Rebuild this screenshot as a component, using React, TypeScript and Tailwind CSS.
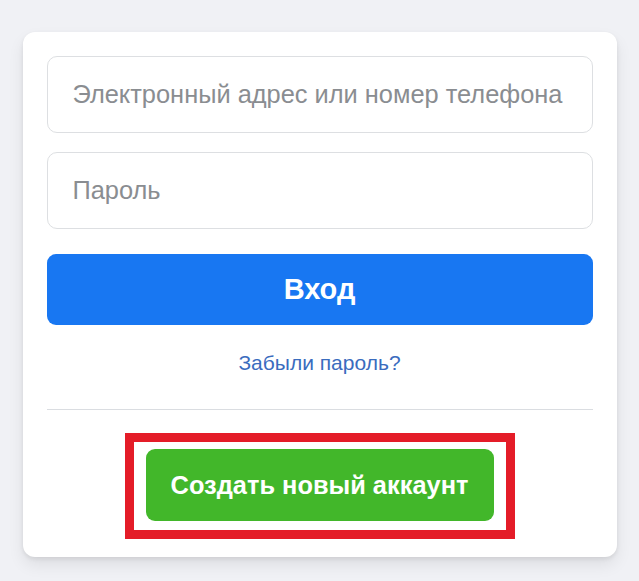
export default function App() {
  return (
    <div
      className="min-h-[581px] w-full bg-[#f0f1f5] pt-[32px]"
      style={{ fontFamily: '"Liberation Sans", Arial, sans-serif' }}
    >
      <div className="mx-auto w-[594px] rounded-[12px] bg-white px-[24px] pt-[24px] pb-[18px] shadow-[0_2px_4px_rgba(0,0,0,0.08),0_8px_16px_rgba(0,0,0,0.08)]">
        <form className="flex flex-col" onSubmit={(e) => e.preventDefault()}>
          <input
            type="text"
            placeholder="Электронный адрес или номер телефона"
            className="h-[77px] w-full rounded-[10px] border border-[#dddfe2] bg-white px-[25px] text-[25.4px] text-[#1c1e21] outline-none placeholder:text-[#8a8d91]"
          />
          <input
            type="password"
            placeholder="Пароль"
            className="mt-[19px] h-[77px] w-full rounded-[10px] border border-[#dddfe2] bg-white px-[25px] text-[25.4px] text-[#1c1e21] outline-none placeholder:text-[#8a8d91]"
          />
          <button
            type="submit"
            className="mt-[25px] h-[71px] w-full rounded-[9px] bg-[#1877f2] text-[29px] font-bold text-white"
          >
            Вход
          </button>
        </form>

        <a
          href="#"
          className="mt-[26px] block text-center text-[21px] leading-[24px] text-[#3a6cbe]"
        >
          Забыли пароль?
        </a>

        <div className="mt-[34px] h-px bg-[#dadde1]" />

        <div className="mt-[23px] flex justify-center">
          <div className="border-[9px] border-[#e41c28] pt-[7px] pr-[12px] pb-[9px] pl-[12px]">
            <button
              type="button"
              className="h-[72px] w-[348px] rounded-[9px] bg-[#42b72a] text-[25.4px] font-bold text-white"
            >
              Создать новый аккаунт
            </button>
          </div>
        </div>
      </div>
    </div>
  )
}
